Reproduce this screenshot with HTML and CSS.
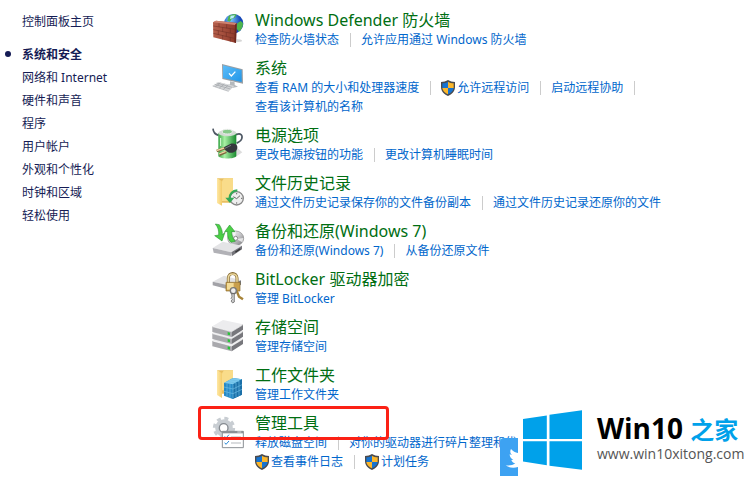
FILE: index.html
```html
<!DOCTYPE html>
<html lang="zh-CN">
<head>
    <meta charset="UTF-8">
    <meta name="viewport" content="width=device-width, initial-scale=1.0">
    <title>系统和安全</title>
    <link rel="stylesheet" href="styles.css">
</head>
<body>
    <svg class="defs" aria-hidden="true">
        <defs>
            <linearGradient id="folder" x2="1"><stop offset="0" stop-color="#ffe8a4"/><stop offset="1" stop-color="#f3cc6a"/></linearGradient>
            <linearGradient id="metal" x2="1" y2="1"><stop offset="0" stop-color="#fafafa"/><stop offset=".5" stop-color="#c9c9cb"/><stop offset="1" stop-color="#77777c"/></linearGradient>
            <linearGradient id="brick" x2="1"><stop offset="0" stop-color="#b6604c"/><stop offset="1" stop-color="#8d3829"/></linearGradient>
            <linearGradient id="cell" x2="1"><stop offset="0" stop-color="#38a646"/><stop offset=".35" stop-color="#a8f0a4"/><stop offset="1" stop-color="#188a2e"/></linearGradient>
            <linearGradient id="screen" x2="1" y2="1"><stop offset="0" stop-color="#5dbcf8"/><stop offset="1" stop-color="#2196e8"/></linearGradient>
            <radialGradient id="globe" cx=".35" cy=".3"><stop offset="0" stop-color="#7cc8ff"/><stop offset="1" stop-color="#1548b8"/></radialGradient>
        </defs>
        <symbol id="shield" viewBox="0 0 42 48">
            <path fill="#4b4b4d" d="M21 0C15 4 8 6 0 6v15c0 13 9 22 21 27 12-5 21-14 21-27V6C34 6 27 4 21 0z"/>
            <path fill="#1673d1" d="M21 5c-5 3-11 5-17 5v14h17z"/>
            <path fill="#fcb72b" d="M21 5c5 3 11 5 17 5v14H21z"/>
            <path fill="#fcb72b" d="M4 24h17v19C12 39 5 33 4 24z"/>
            <path fill="#1673d1" d="M38 24H21v19c9-4 16-10 17-19z"/>
        </symbol>
    </svg>

    <div class="page">
        <nav class="sidebar">
            <a class="home" href="#">控制面板主页</a>
            <ul>
                <li class="current"><a href="#">系统和安全</a></li>
                <li><a href="#">网络和 Internet</a></li>
                <li><a href="#">硬件和声音</a></li>
                <li><a href="#">程序</a></li>
                <li><a href="#">用户帐户</a></li>
                <li><a href="#">外观和个性化</a></li>
                <li><a href="#">时钟和区域</a></li>
                <li><a href="#">轻松使用</a></li>
            </ul>
        </nav>

        <main class="categories">
            <section class="category">
                <svg class="icon" viewBox="0 0 96 96">
                    <ellipse cx="72" cy="86" rx="18" ry="5" fill="#d6d6d6"/>
                    <circle cx="65" cy="35" r="29" fill="url(#globe)"/>
                    <path fill="#4fb54c" d="M50 12c8-5 18-6 24-4l-6 9-9 4-5 8-8-2zM76 34l10-7 7 6c0 12-4 20-12 26l-8-10z"/>
                    <path fill="#b9ebff" d="M56 11l13-1-5 8-10 3z"/>
                    <path fill="url(#brick)" d="M3 31l9-5 62 7-2 60L4 76z"/>
                    <path fill="#cf8370" d="M3 31l9-5 62 7-5 6z"/>
                    <path fill="#6d291e" d="M69 39l5-6-2 60-5-2z"/>
                    <path fill="none" stroke="#6e2e23" stroke-width="1.6" d="M4 42l65 10M4 53l64 13M4 64l63 15M21 34v11M44 37v12M32 46v13M55 50v13M19 56v12M43 61v12M32 70v13M55 76v13"/>
                </svg>
                <div class="details">
                    <h2><a href="#">Windows Defender 防火墙</a></h2>
                    <div class="links"><a href="#">检查防火墙状态</a><a href="#">允许应用通过 Windows 防火墙</a></div>
                </div>
            </section>

            <section class="category">
                <svg class="icon" viewBox="0 0 96 96">
                    <path fill="#999fa4" d="M30 12l62 16 1 43-62-14z"/>
                    <path fill="url(#screen)" d="M33 16l56 14v36l-56-12z"/>
                    <path fill="none" stroke="#fff" stroke-width="4" d="M51 40l7 8 12-13"/>
                    <path fill="#b5b9bc" d="M54 64l14 3v8l10 5-18 4-12-8 6-3z"/>
                    <path fill="#d4d6d8" d="M20 66l47 12-16 15L2 77z"/>
                    <path fill="none" stroke="#9da2a6" stroke-width="2" d="M2 78l48 16M14 69l46 13M8 73l47 14M25 69L10 80M37 72L22 84M49 75L34 88"/>
                </svg>
                <div class="details">
                    <h2><a href="#">系统</a></h2>
                    <div class="links more"><a href="#">查看 RAM 的大小和处理器速度</a><a href="#"><svg class="shield"><use href="#shield"/></svg>允许远程访问</a><a href="#">启动远程协助</a></div>
                    <div class="links"><a href="#">查看该计算机的名称</a></div>
                </div>
            </section>

            <section class="category">
                <svg class="icon" viewBox="0 0 96 96">
                    <path fill="#ddd" d="M42 90l32-2 17-12-14-12z"/>
                    <path fill="none" stroke="#4e5864" stroke-width="5" d="M3 5c1 14 9 18 17 20M72 23c14-6 21 1 17 13-3 9-10 9-15 13"/>
                    <path fill="url(#cell)" d="M19 18v70c7 9 47 9 54 0V18z"/>
                    <ellipse cx="46" cy="18" rx="27" ry="10" fill="#d3dad3"/>
                    <ellipse cx="46" cy="14" rx="15" ry="7" fill="#87c98a" stroke="#eee" stroke-width="3"/>
                    <path fill="none" stroke="#e5ffe2" stroke-width="3" d="M26 33v24"/>
                    <path fill="#35383d" d="M32 62l24-12c13-1 21 3 20 13-2 13-18 18-29 12z"/>
                    <path fill="none" stroke="#747980" stroke-width="3" d="M39 64l18-9"/>
                    <path fill="none" stroke="#80683e" stroke-width="8" d="M38 64l-24 8M43 74l-21 9"/>
                    <path fill="none" stroke="#edd8a4" stroke-width="4" d="M36 63l-22 8M41 73l-20 8"/>
                </svg>
                <div class="details">
                    <h2><a href="#">电源选项</a></h2>
                    <div class="links"><a href="#">更改电源按钮的功能</a><a href="#">更改计算机睡眠时间</a></div>
                </div>
            </section>

            <section class="category">
                <svg class="icon" viewBox="0 0 96 96">
                    <path fill="#e8bf62" d="M15 10h48v73H30l-15-2z"/>
                    <path fill="url(#folder)" d="M15 9l15 10v73l-15-8z"/>
                    <path fill="#f9dc8a" d="M30 19l6-9h27v68H30z"/>
                    <circle cx="74" cy="70" r="20" fill="#eee" stroke="#888" stroke-width="4"/>
                    <path fill="none" stroke="#666" stroke-width="3" d="M74 71l-10-6M74 71l10-9M74 54v4M74 82v4M87 70h4"/>
                    <path fill="none" stroke="#35a957" stroke-width="7" d="M53 70c0-14 9-23 23-24"/>
                    <path fill="#35a957" d="M40 68h27L54 84z"/>
                </svg>
                <div class="details">
                    <h2><a href="#">文件历史记录</a></h2>
                    <div class="links"><a href="#">通过文件历史记录保存你的文件备份副本</a><a href="#">通过文件历史记录还原你的文件</a></div>
                </div>
            </section>

            <section class="category">
                <svg class="icon" viewBox="0 0 96 96">
                    <ellipse cx="71" cy="46" rx="24" ry="22" fill="url(#metal)" stroke="#888" stroke-width="2"/>
                    <path fill="#fff" opacity=".7" d="M70 45L58 28l13-4zM73 48l21-3-3 13z"/>
                    <circle cx="71" cy="46" r="6" fill="#fff" stroke="#888" stroke-width="3"/>
                    <path fill="#e4e4e6" d="M2 75l30-19 58 12-32 20z"/>
                    <path fill="#b1b1b6" d="M2 75l56 13v11L5 89z"/>
                    <path fill="#737379" d="M58 88l32-20v11L60 99z"/>
                    <path fill="none" stroke="#333" stroke-width="4" d="M70 88l15-11"/>
                    <path fill="#4bcf46" stroke="#168522" stroke-width="1.5" d="M10 3l12 2c7 11 10 20 9 30l8-7-9 26L8 38l12-2c1-13-2-23-10-33z"/>
                    <path fill="#4bcf46" stroke="#168522" stroke-width="1.5" d="M53 6l16 20H59c1 14 3 20 11 29l-13 3C47 47 46 37 47 26h-9z"/>
                </svg>
                <div class="details">
                    <h2><a href="#">备份和还原(Windows 7)</a></h2>
                    <div class="links"><a href="#">备份和还原(Windows 7)</a><a href="#">从备份还原文件</a></div>
                </div>
            </section>

            <section class="category">
                <svg class="icon" viewBox="0 0 96 96">
                    <path fill="#e2e2e4" d="M2 32l34-18 51 14-28 18z"/>
                    <path fill="#a2a2a7" d="M2 32l54 12v13L2 43z"/>
                    <path fill="#737378" d="M56 44l31-16v13L56 57z"/>
                    <path fill="none" stroke="#866b35" stroke-width="9" d="M49 37V21c1-18 25-18 26 0v16"/>
                    <path fill="none" stroke="#ead69b" stroke-width="5" d="M49 36V21c1-16 25-16 26 0v16"/>
                    <path fill="#c99f4d" stroke="#8c6c2c" stroke-width="2" d="M42 34h42v26H42z"/>
                    <path fill="#f3dc98" d="M45 36h20v20H45z"/>
                    <path fill="none" stroke="#a78439" stroke-width="7" d="M73 57l8 20 12 8"/>
                    <circle cx="64" cy="59" r="9" fill="#eee" stroke="#777" stroke-width="4"/>
                    <path fill="#ccc" stroke="#555" stroke-width="2" d="M59 68h8v25l-5 3-5-6 4-4-4-4 3-4z"/>
                </svg>
                <div class="details">
                    <h2><a href="#">BitLocker 驱动器加密</a></h2>
                    <div class="links"><a href="#">管理 BitLocker</a></div>
                </div>
            </section>

            <section class="category">
                <svg class="icon" viewBox="0 0 96 96">
                    <g id="drive">
                        <path fill="#a9a9ad" d="M1 65l58 15v17L1 82z"/>
                        <path fill="#77777c" d="M59 80l34-21v16L59 97z"/>
                        <path fill="#ececee" d="M1 65l32-19 60 13-34 21z"/>
                        <path fill="none" stroke="#fff" stroke-width="2" d="M2 66l57 15 33-20"/>
                        <path fill="#29c438" d="M47 82l7 2v8l-7-2z"/>
                    </g>
                    <use href="#drive" y="-22"/>
                    <use href="#drive" y="-43"/>
                </svg>
                <div class="details">
                    <h2><a href="#">存储空间</a></h2>
                    <div class="links"><a href="#">管理存储空间</a></div>
                </div>
            </section>

            <section class="category">
                <svg class="icon" viewBox="0 0 96 96">
                    <path fill="#e8bf62" d="M15 10h48v70H30z"/>
                    <path fill="url(#folder)" d="M15 9l15 10v74l-15-9z"/>
                    <path fill="#f9dc8a" d="M30 19l6-9h27v60H30z"/>
                    <path fill="#2589c6" d="M36 48l27-15 27 4v46l-28 13-26-10z"/>
                    <path fill="#7cc9ee" d="M36 48l27-15 27 4-27 15z"/>
                    <path fill="#1b70a8" d="M63 52l27-15v46L62 96z"/>
                    <path fill="none" stroke="#6dbde4" stroke-width="2" d="M36 60l27 6 27-13M36 73l27 7 27-13M45 50v39M54 51v41M63 52v43M72 47v43M81 42v44M45 43l26 5M54 38l27 5"/>
                </svg>
                <div class="details">
                    <h2><a href="#">工作文件夹</a></h2>
                    <div class="links"><a href="#">管理工作文件夹</a></div>
                </div>
            </section>

            <section class="category marked">
                <svg class="icon" viewBox="0 0 96 96">
                    <g fill="none" stroke="#c8cdd2">
                        <circle cx="36" cy="39" r="19" stroke-width="15"/>
                        <circle cx="36" cy="39" r="29" stroke-width="9" stroke-dasharray="12 10.8"/>
                    </g>
                    <circle cx="35" cy="39" r="13" fill="#fff" stroke="#858a90" stroke-width="4"/>
                    <path fill="#fff" stroke="#8b9095" stroke-width="3" d="M31 49h63v49H31z"/>
                    <path fill="#8b9095" d="M31 48h63v7H31z"/>
                    <path fill="none" stroke="#2d8dd8" stroke-width="3" d="M38 64l4 5 9-10M38 83l4 5 9-10"/>
                    <path stroke="#b5b9bd" stroke-width="3" d="M57 66h30M57 84h30"/>
                    <path stroke="#fff" stroke-width="2" d="M76 51h12"/>
                </svg>
                <div class="details">
                    <h2><a href="#">管理工具</a></h2>
                    <div class="links"><a href="#">释放磁盘空间</a><a href="#">对你的驱动器进行碎片整理和优</a></div>
                    <div class="links"><a href="#"><svg class="shield"><use href="#shield"/></svg>查看事件日志</a><a href="#"><svg class="shield"><use href="#shield"/></svg>计划任务</a></div>
                </div>
            </section>
        </main>

        <div class="watermark">
            <svg class="bird" viewBox="0 0 54 114">
                <path fill="#3da2f2" d="M12 0h42v114H0V12Q0 0 12 0z"/>
                <path fill="#fff" d="M54 45c-8-1-15-5-21-12-4 7-2 13 3 18l-7-2c0 8 4 13 11 16l-6 1c2 6 6 9 12 10-8 6-18 8-29 6 11 8 25 9 37 5z"/>
            </svg>
            <svg class="windows" viewBox="0 0 176 178">
                <path fill="#00a1ea" d="M0 26l71-10v70H0zM79 14l97-14v86H79zM0 93h71v71L0 153zM79 93h97v85L79 166z"/>
            </svg>
            <div class="brand">
                <div class="name">Win10 <span>之家</span></div>
                <div class="url">www.win10xitong.com</div>
            </div>
        </div>
    </div>
</body>
</html>
```

FILE: styles.css
```css
body {
    margin: 0;
    background: #fff;
    font-family: "Noto Sans", "Noto Sans CJK SC", sans-serif;
    font-size: 12px;
}

a {
    color: #0066cc;
    text-decoration: none;
}

a:hover {
    text-decoration: underline;
}

.defs {
    position: absolute;
    width: 0;
    height: 0;
}

.page {
    position: relative;
    display: flex;
    overflow: hidden;
}

/* left navigation */
.sidebar {
    flex: 0 0 190px;
    padding: 10px 0 0 22px;
    line-height: 23px;
}

.sidebar a {
    color: #151c55;
}

.sidebar ul {
    list-style: none;
    margin: 10px 0 0;
    padding: 0;
}

.current {
    position: relative;
    font-weight: bold;
}

.current::before {
    content: "";
    position: absolute;
    left: -17px;
    top: 8px;
    width: 6px;
    height: 6px;
    border-radius: 50%;
    background: #151c55;
}

/* categories */
.categories {
    flex: 1;
    min-width: 0;
    padding-top: 11px;
}

.category {
    position: relative;
    display: flex;
    gap: 11px;
    margin-bottom: 10px;
}

.icon {
    flex: none;
    width: 32px;
    height: 32px;
    margin-top: 1px;
    overflow: visible;
}

.details {
    min-width: 0;
}

h2 {
    margin: 0;
    font-size: 16px;
    font-weight: normal;
    line-height: 19px;
}

h2 a {
    color: #006e12;
}

.links {
    display: flex;
    align-items: center;
    height: 19px;
    line-height: 19px;
    white-space: nowrap;
}

.links a {
    display: flex;
    align-items: center;
}

.links a + a::before,
.more a:last-child::after {
    content: "";
    width: 1px;
    height: 14px;
    margin: 0 10px 0 11px;
    background: #ccc;
}

.shield {
    width: 14px;
    height: 16px;
    margin-right: 2px;
}

/* red frame around the tools entry */
.marked::after {
    content: "";
    position: absolute;
    left: -14px;
    top: -8px;
    width: 185px;
    height: 28px;
    border: 3px solid #fb2115;
    border-radius: 4px;
}

.watermark {
    position: absolute;
    right: 0;
    top: 405px;
    display: flex;
    width: 253px;
    height: 76px;
}

.bird {
    width: 18px;
    height: 38px;
    margin-top: 33px;
}

.windows {
    width: 59px;
    height: 60px;
    padding: 5px 0 11px 5px;
    background: #fff;
}

.brand {
    flex: 1;
    padding: 7px 0 0 15px;
    background: #fff;
    white-space: nowrap;
}

.name {
    color: #000;
    font-family: "Open Sans", "Noto Sans CJK SC", sans-serif;
    font-size: 28px;
    font-weight: bold;
    line-height: 33px;
}

.name span {
    color: #00a1ea;
    font-size: 24px;
}

.url {
    color: #555;
    font-family: "Open Sans", sans-serif;
    font-size: 14px;
    line-height: 16px;
}
```
